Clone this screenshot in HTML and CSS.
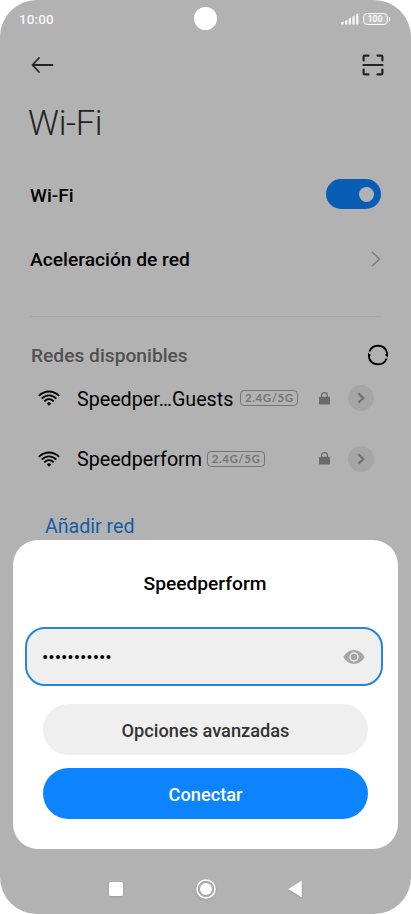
FILE: index.html
```html
<!DOCTYPE html>
<html lang="es">
<head>
<meta charset="utf-8">
<meta name="viewport" content="width=device-width, initial-scale=1">
<title>Wi-Fi</title>
<link rel="stylesheet" href="styles.css">
</head>
<body>
<div class="phone">
  <header class="status">
    <span class="time">10:00</span>
    <span class="camera"></span>
    <div class="indicators">
      <svg class="signal" width="18" height="12" viewBox="0 0 18 12" fill="currentColor"><path d="M0 9.5 2.8 8.5V11.5H0zM4 8 6.3 6.6V11.5H4zM7.7 5.8 10 4.4V11.5H7.7zM11.4 3.6 13.7 2.2V11.5h-2.300zM15.100 1.500 17.400.2V11.500h-2.300z"/></svg>
      <span class="battery">100</span><i class="battery-tip"></i>
    </div>
  </header>
  <nav class="appbar">
    <svg width="23" height="18" viewBox="0 0 23 18" fill="none" stroke="currentColor" stroke-width="1.800" stroke-linecap="round" stroke-linejoin="round"><path d="M21.500 9H1.500M8 2 1.500 9l6.500 7"/></svg>
    <svg width="22" height="22" viewBox="0 0 22 22" fill="none" stroke="currentColor" stroke-width="2.200" stroke-linecap="round" stroke-linejoin="round"><path d="M1.600 6.500V2.800Q1.600 1.600 2.800 1.600H6.500M15.500 1.600h3.700q1.200 0 1.200 1.200V6.500M1.600 15.500v3.700q0 1.200 1.200 1.200H6.500M15.500 20.400h3.700q1.200 0 1.200-1.200V15.500M1.500 11H20.500"/></svg>
  </nav>
  <h1 class="title">Wi-Fi</h1>
  <section class="settings">
    <div class="row"><span class="label">Wi-Fi</span><span class="toggle"><i></i></span></div>
    <div class="row"><span class="label">Aceleración de red</span>
      <svg class="more" width="10" height="16" viewBox="0 0 10 16" fill="none" stroke="currentColor" stroke-width="1.300"><path d="M1 1 8.500 8 1 15"/></svg></div>
  </section>
  <section class="networks">
    <div class="heading"><h2>Redes disponibles</h2>
      <svg width="22" height="22" viewBox="0 0 22 22" fill="none" stroke="#000" stroke-width="1.900"><path d="M1.900 13A9.300 9.300 0 0 0 19.600 14.500M20.100 9A9.300 9.300 0 0 0 2.400 7.500"/><path d="M1 8.600 4.200 11.200 2.900 11.700V13.300H1zM21 13.400 17.800 10.800 19.100 10.300V8.700H21z" fill="#000" stroke="none"/></svg>
    </div>
    <div class="network">
      <svg class="wifi" width="22" height="16" viewBox="0 0 22 16" fill="none" stroke="#000" stroke-width="1.800"><path d="M.8 5.900Q5.500 1.500 11 1.500T21.200 5.900M3.700 8.700Q7 5.400 11 5.400T18.300 8.700M6.300 11.400Q8.300 9.200 11 9.200T15.700 11.400"/><path d="M8.600 13.400Q11 11.300 13.400 13.400L11 15.700z" fill="#000" stroke="none"/></svg>
      <span class="name">Speedper…Guests</span><span class="band">2.4G/5G</span>
      <svg class="lock" width="11" height="13" viewBox="0 0 11 13"><rect y="4.800" width="11" height="7.800" rx="1" fill="currentColor"/><path d="M2.600 5V3.500a2.900 2.900 0 0 1 5.800 0V5" fill="none" stroke="currentColor" stroke-width="1.200"/></svg>
      <span class="details"><svg width="8" height="12" viewBox="0 0 8 12" fill="none" stroke="currentColor" stroke-width="2.200"><path d="M1.500 1.300 6.300 6 1.500 10.700"/></svg></span>
    </div>
    <div class="network">
      <svg class="wifi" width="22" height="16" viewBox="0 0 22 16" fill="none" stroke="#000" stroke-width="1.800"><path d="M.8 5.900Q5.500 1.500 11 1.500T21.200 5.900M3.700 8.700Q7 5.400 11 5.400T18.300 8.700M6.300 11.400Q8.300 9.200 11 9.200T15.700 11.400"/><path d="M8.600 13.400Q11 11.300 13.400 13.400L11 15.700z" fill="#000" stroke="none"/></svg>
      <span class="name short">Speedperform</span><span class="band">2.4G/5G</span>
      <svg class="lock" width="11" height="13" viewBox="0 0 11 13"><rect y="4.800" width="11" height="7.800" rx="1" fill="currentColor"/><path d="M2.600 5V3.500a2.900 2.900 0 0 1 5.800 0V5" fill="none" stroke="currentColor" stroke-width="1.200"/></svg>
      <span class="details"><svg width="8" height="12" viewBox="0 0 8 12" fill="none" stroke="currentColor" stroke-width="2.200"><path d="M1.500 1.300 6.300 6 1.500 10.700"/></svg></span>
    </div>
    <a class="add">Añadir red</a>
  </section>
  <section class="dialog">
    <h2>Speedperform</h2>
    <div class="field">
      <span class="dots">•••••••••••</span>
      <svg width="22" height="16" viewBox="0 0 22 16"><path d="M.3 8Q4.500 1 11 1t10.700 7Q17.500 15 11 15T.3 8z" fill="#a5a5a5"/><circle cx="11" cy="8" r="4" fill="#a5a5a5" stroke="#efefef" stroke-width="1.400"/></svg>
    </div>
    <button class="secondary">Opciones avanzadas</button>
    <button class="primary">Conectar</button>
  </section>
  <footer class="navbar">
    <svg width="16" height="20" viewBox="0 0 16 20"><rect x="1" y="3" width="14" height="14" rx="1.500" fill="#fff"/></svg>
    <svg width="20" height="20" viewBox="0 0 20 20"><circle cx="10" cy="10" r="9" fill="none" stroke="#fff" stroke-width="1.500"/><circle cx="10" cy="10" r="6" fill="#fff"/></svg>
    <svg width="16" height="20" viewBox="0 0 16 20"><path d="M1.200 10 14.700 1.800V18.200z" fill="#fff"/></svg>
  </footer>
</div>
</body>
</html>
```
FILE: styles.css
```css
* { box-sizing: border-box; }
body { margin: 0; background: #fff; font-family: Roboto, sans-serif; color: #000; }
svg { display: block; flex: none; }
h1, h2 { margin: 0; }
.phone { position: relative; width: 411px; height: 914px; display: flex; flex-direction: column; background: #b2b2b2; border-radius: 37px; overflow: hidden; }
.status { height: 38px; padding: 0 22px 0 19px; display: grid; grid-template-columns: 175px 23px 1fr; align-items: center; color: #f7f7f7; }
.time { font-size: 13.500px; font-weight: 500; line-height: 16px; letter-spacing: .1px; }
.camera { width: 23px; height: 23px; margin-top: -1px; border-radius: 50%; background: #fff; }
.indicators { display: flex; align-items: center; justify-content: flex-end; }
.signal { margin-right: 4px; }
.battery { width: 25px; height: 12px; border: 1.500px solid; border-radius: 4px; font-size: 8.500px; line-height: 10px; font-weight: 700; text-align: center; background: #bebebe; }
.battery-tip { width: 1.500px; height: 4px; background: #f7f7f7; margin-left: 1px; margin-right: -1px; }
.appbar { height: 54px; padding: 0 27px 0 31px; display: flex; align-items: center; justify-content: space-between; color: #242424; }
.title { height: 70px; padding: 9px 28px 0; font-size: 34.500px; line-height: 44px; font-weight: 300; letter-spacing: -.3px; color: #242424; }
.settings { margin: 0 30px; height: 155px; border-bottom: 1px solid #a7a7a7; }
.row { height: 64.500px; display: flex; align-items: center; justify-content: space-between; }
.label { font-size: 19.200px; font-weight: 500; padding-top: 2px; }
.toggle { width: 55px; height: 30px; padding: 0 7px; border-radius: 15px; background: #095db4; display: flex; align-items: center; justify-content: flex-end; }
.toggle i { width: 15px; height: 15px; border-radius: 50%; background: #b2b2b2; }
.more { color: #7a7a7a; }
.networks { padding: 19px 23px 0 31px; }
.heading { height: 38px; display: flex; align-items: center; justify-content: space-between; }
.heading h2 { font-size: 19.200px; font-weight: 500; color: #515151; }
.heading svg { margin-right: -1px; }
.network { height: 60.500px; padding: 0 14px 0 7px; display: flex; align-items: center; }
.heading + .network { margin-top: -6px; }
.name { margin-left: 17px; padding-top: 2px; font-size: 19.700px; white-space: nowrap; }
.band { height: 16px; width: 58px; margin-left: 7px; border: 1.500px solid #767676; border-radius: 4px; color: #767676; font: 700 11.500px/14px Lato, sans-serif; letter-spacing: .55px; text-align: center; }
.short + .band { margin-left: 5px; }
.lock { margin-left: auto; color: #6a6a6a; }
.details { width: 26px; height: 26px; margin-left: 18px; border-radius: 50%; background: #a6a6a6; color: #707070; display: flex; align-items: center; justify-content: center; }
.add { display: block; margin: 25px 0 0 14px; font-size: 19.600px; line-height: 26px; color: #155ca9; }
.dialog { position: absolute; left: 13px; top: 540px; width: 385px; height: 309px; padding: 30px 13px 0 12px; background: #fff; border-radius: 25px; display: flex; flex-direction: column; }
.dialog h2 { height: 57px; line-height: 28px; font-size: 19.200px; font-weight: 500; text-align: center; }
.field { width: 358px; height: 59px; padding: 0 16px 0 15px; border: 2px solid #2684de; border-radius: 20px; background: #efefef; display: flex; align-items: center; justify-content: space-between; }
.dots { padding-top: 2px; font-size: 19px; letter-spacing: -.08px; }
.dialog button { width: 325px; height: 51px; margin: 18px 0 0 18px; border: 0; border-radius: 26px; font: 500 18.200px Roboto, sans-serif; padding: 1px 0 0; }
.dialog .secondary { background: #efefef; color: #333; }
.dialog .primary { margin-top: 13px; background: #0d84ff; color: #fff; }
.navbar { margin-top: auto; height: 50px; padding: 0 108px; display: flex; align-items: center; justify-content: space-between; filter: drop-shadow(0 1px 1px #0002); }
```
